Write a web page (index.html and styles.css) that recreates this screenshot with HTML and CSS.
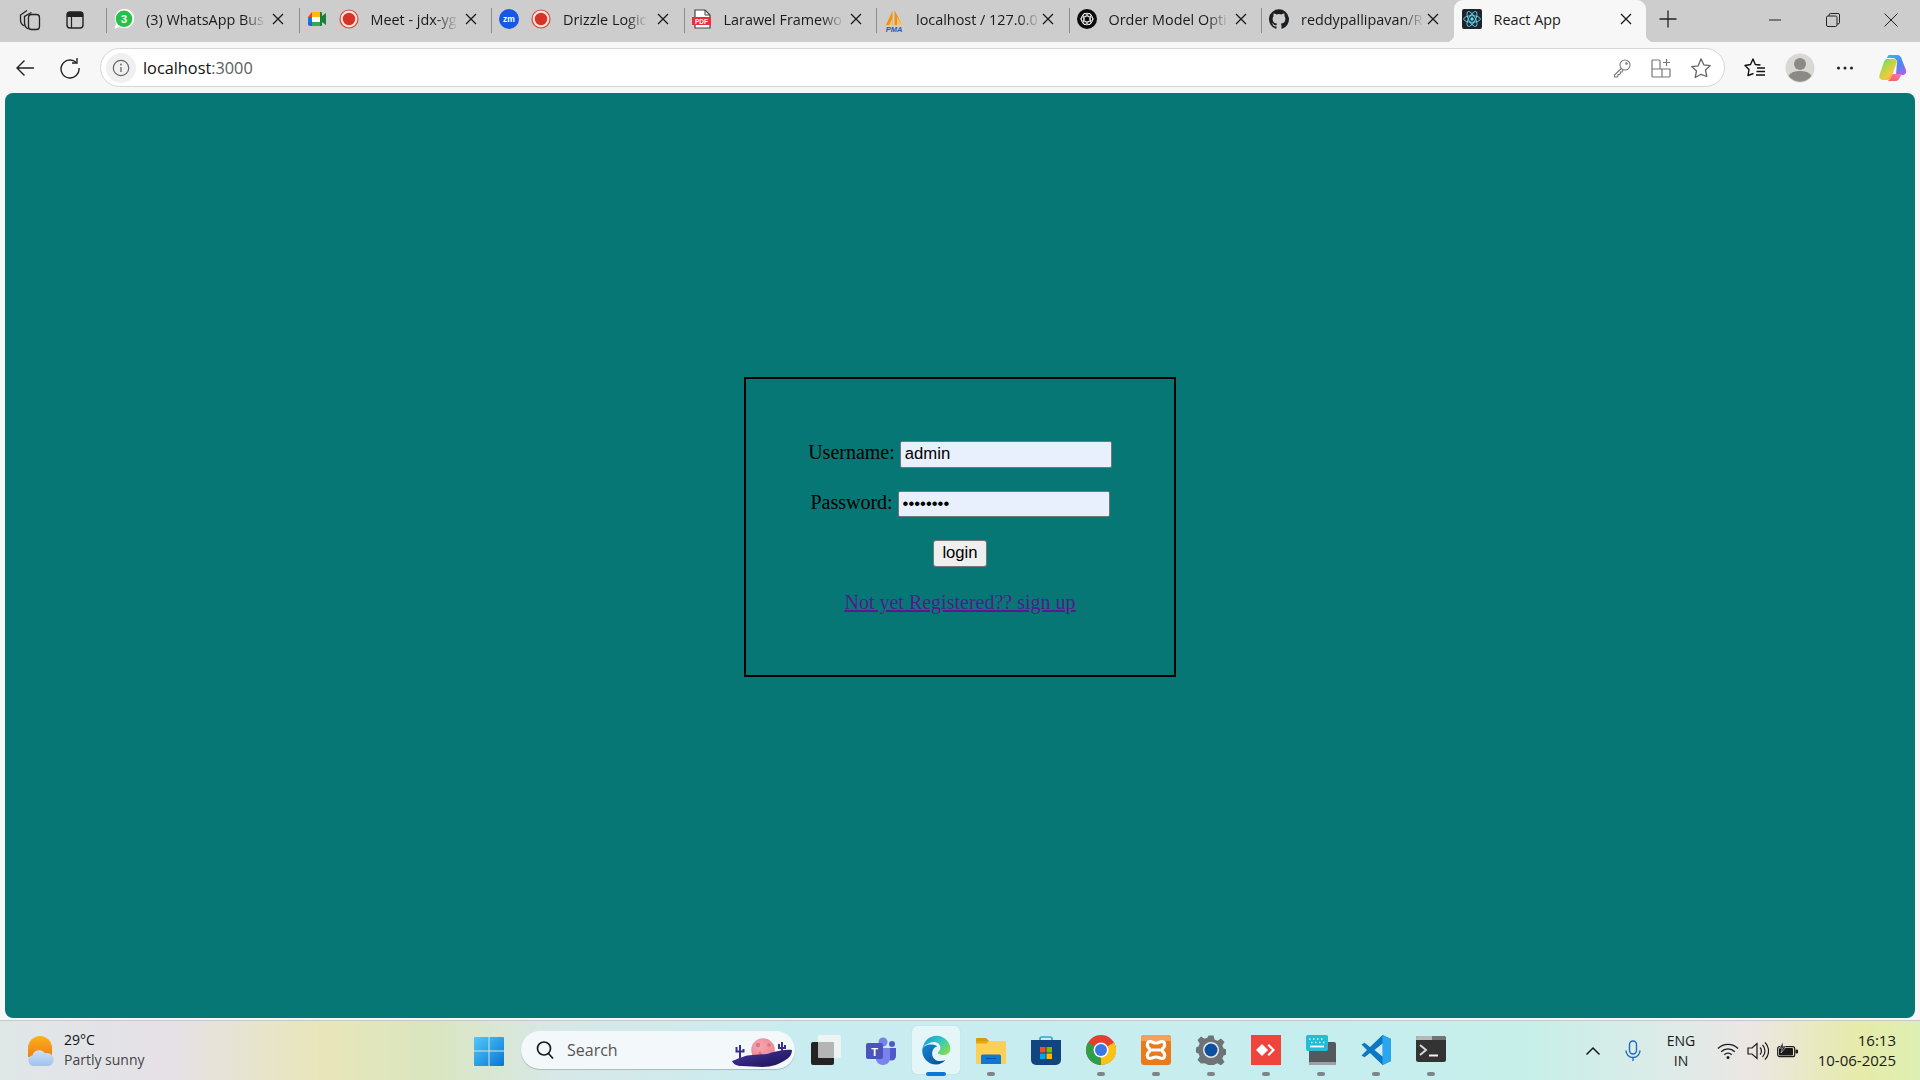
FILE: index.html
```html
<!DOCTYPE html>
<html lang="en">
<head>
<meta charset="utf-8">
<title>React App</title>
<link rel="stylesheet" href="styles.css">
</head>
<body>
<svg class="defs" aria-hidden="true">
  <defs>
    <symbol id="x" viewBox="0 0 12 12"><path d="M1 1l10 10M11 1L1 11" fill="none" stroke="#1a1a1a" stroke-width="1.3"/></symbol>
    <symbol id="rec" viewBox="0 0 20 20"><circle cx="10" cy="10" r="9" fill="#f4e4e2" stroke="#e0453a" stroke-width="1.2"/><circle cx="10" cy="10" r="6.2" fill="#dc3226"/></symbol>
  </defs>
</svg>

<header class="tabstrip">
  <div class="strip-btn"><svg width="24" height="24" viewBox="0 0 24 24" fill="none" stroke="#222" stroke-width="1.3"><rect x="10.500" y="6.500" width="11" height="15" rx="3"/><path d="M10.500 21C7.500 20 6.500 17 6.500 14V8.500L13.500 4.500"/><path d="M6.500 18C4 17 2.500 15 2.500 12V7L9 2.500"/></svg></div>
  <div class="strip-btn"><svg width="20" height="20" viewBox="0 0 20 20"><rect x="2" y="2" width="16" height="16" rx="3" fill="none" stroke="#222" stroke-width="1.4"/><path d="M2 5a3 3 0 0 1 3-3h10a3 3 0 0 1 3 3v2H2z" fill="#222"/><path d="M6.500 7v11" stroke="#222" stroke-width="1.2"/></svg></div>

  <i class="sep first"></i>
  <div class="tab">
    <svg class="fav" viewBox="0 0 20 20"><path d="M.5 19.700l1.600-5.400A9.700 9.700 0 1 1 5.800 18z" fill="#fff"/><circle cx="10" cy="9.800" r="8.300" fill="#25c24a"/><text x="10" y="14" class="fav-num">3</text></svg>
    <span class="label">(3) WhatsApp Bus</span>
    <svg class="close"><use href="#x"/></svg>
  </div>
  <i class="sep"></i>
  <div class="tab">
    <svg class="fav" viewBox="0 0 20 20"><path d="M5 3h8v5H1z" fill="#fbbc04"/><path d="M1 8h4v5H1z" fill="#1a73e8"/><path d="M5 3v5H1z" fill="#ea4335"/><path d="M1 13h4v4H3a2 2 0 0 1-2-2z" fill="#1967d2"/><path d="M5 13h8v4H5z" fill="#34a853"/><path d="M13 3v14h1a1 1 0 0 0 1-1v-3l4 3V4l-4 3V4a1 1 0 0 0-1-1z" fill="#188038"/><path d="M5 8h8v5H5z" fill="#fff"/></svg>
    <svg class="fav rec"><use href="#rec"/></svg>
    <span class="label">Meet - jdx-yg</span>
    <svg class="close"><use href="#x"/></svg>
  </div>
  <i class="sep"></i>
  <div class="tab">
    <svg class="fav" viewBox="0 0 20 20"><circle cx="10" cy="10" r="10" fill="#1557e6"/><text x="10" y="12.800" class="fav-zm">zm</text></svg>
    <svg class="fav rec"><use href="#rec"/></svg>
    <span class="label">Drizzle Logic</span>
    <svg class="close"><use href="#x"/></svg>
  </div>
  <i class="sep"></i>
  <div class="tab">
    <svg class="fav" viewBox="0 0 20 20"><path d="M3 1h10l5 5v13H3z" fill="#fff" stroke="#444" stroke-width="1.200"/><path d="M13 1v5h5" fill="none" stroke="#444"/><rect x="0" y="8" width="19" height="8" fill="#e8303a"/><text x="9.500" y="14.600" class="fav-pdf">PDF</text></svg>
    <span class="label">Larawel Framewo</span>
    <svg class="close"><use href="#x"/></svg>
  </div>
  <i class="sep"></i>
  <div class="tab">
    <svg class="fav tall" viewBox="0 0 20 24"><path d="M2 16L8.500 2v14zM10.500 16L10.500 1 18 16z" fill="#f29111"/><path d="M5 16l3.500-7v7zM13 16V8l5 8z" fill="#f8c26a"/><text x="10" y="23" class="fav-pma">PMA</text></svg>
    <span class="label">localhost / 127.0.0</span>
    <svg class="close"><use href="#x"/></svg>
  </div>
  <i class="sep"></i>
  <div class="tab">
    <svg class="fav" viewBox="0 0 20 20"><circle cx="10" cy="10" r="10" fill="#0c0c0c"/><g fill="none" stroke="#fff" stroke-width=".8"><ellipse cx="10" cy="10" rx="6.200" ry="2.800"/><ellipse cx="10" cy="10" rx="6.200" ry="2.800" transform="rotate(60 10 10)"/><ellipse cx="10" cy="10" rx="6.200" ry="2.800" transform="rotate(120 10 10)"/><circle cx="10" cy="10" r="5.800"/></g></svg>
    <span class="label">Order Model Opti</span>
    <svg class="close"><use href="#x"/></svg>
  </div>
  <i class="sep"></i>
  <div class="tab">
    <svg class="fav" viewBox="0 0 24 24"><path fill="#1b1f23" d="M12 .3a12 12 0 0 0-3.800 23.380c.6.120.830-.260.830-.570l-.020-2.230c-3.340.730-4.040-1.410-4.040-1.410-.550-1.390-1.330-1.760-1.330-1.760-1.090-.740.080-.730.080-.730 1.200.090 1.840 1.240 1.840 1.240 1.070 1.830 2.810 1.300 3.500 1 .1-.780.420-1.310.760-1.610-2.670-.3-5.470-1.330-5.470-5.930 0-1.310.470-2.380 1.240-3.220-.140-.3-.540-1.520.1-3.180 0 0 1-.320 3.300 1.230a11.500 11.500 0 0 1 6 0c2.280-1.550 3.290-1.230 3.290-1.230.640 1.660.240 2.880.120 3.180a4.650 4.650 0 0 1 1.230 3.220c0 4.610-2.800 5.630-5.480 5.920.420.360.810 1.100.810 2.220l-.010 3.290c0 .310.2.690.820.570A12 12 0 0 0 12 .3"/></svg>
    <span class="label">reddypallipavan/R</span>
    <svg class="close"><use href="#x"/></svg>
  </div>
  <div class="tab active">
    <svg class="fav" viewBox="0 0 20 20"><rect width="20" height="20" rx="2" fill="#20232a"/><g fill="none" stroke="#61dafb" stroke-width=".9"><ellipse cx="10" cy="10" rx="8.300" ry="3.300"/><ellipse cx="10" cy="10" rx="8.300" ry="3.300" transform="rotate(60 10 10)"/><ellipse cx="10" cy="10" rx="8.300" ry="3.300" transform="rotate(120 10 10)"/></g><circle cx="10" cy="10" r="1.700" fill="#61dafb"/></svg>
    <span class="label">React App</span>
    <svg class="close"><use href="#x"/></svg>
  </div>
  <div class="newtab"><svg width="18" height="18" viewBox="0 0 18 18"><path d="M9 .5v17M.5 9h17" stroke="#222" stroke-width="1.300"/></svg></div>

  <div class="winctl">
    <div class="winbtn"><svg width="14" height="14" viewBox="0 0 14 14"><path d="M1 7h12" stroke="#222" stroke-width="1"/></svg></div>
    <div class="winbtn"><svg width="14" height="14" viewBox="0 0 14 14" fill="none" stroke="#222" stroke-width="1"><rect x=".5" y="3" width="10.500" height="10.500" rx="1.500"/><path d="M3 3V2a1.500 1.500 0 0 1 1.500-1.500H12A1.500 1.500 0 0 1 13.500 2v7.500A1.500 1.500 0 0 1 12 11h-1"/></svg></div>
    <div class="winbtn"><svg width="14" height="14" viewBox="0 0 14 14"><path d="M.5.500l13 13M13.500.500l-13 13" stroke="#222" stroke-width="1"/></svg></div>
  </div>
</header>

<nav class="toolbar">
  <div class="tool"><svg width="20" height="20" viewBox="0 0 20 20"><path d="M19 10H2M9.500 2.500L2 10l7.500 7.500" fill="none" stroke="#222" stroke-width="1.400"/></svg></div>
  <div class="tool"><svg width="22" height="22" viewBox="0 0 22 22" fill="none" stroke="#222" stroke-width="1.400"><path d="M17.300 5.500A9 9 0 1 0 20 11"/><path d="M18 1v5h-5"/></svg></div>
  <div class="addr">
    <span class="info"><svg width="18" height="18" viewBox="0 0 18 18"><circle cx="9" cy="9" r="7.700" fill="none" stroke="#666" stroke-width="1.200"/><path d="M9 8v5" stroke="#666" stroke-width="1.300"/><circle cx="9" cy="5.500" r=".9" fill="#666"/></svg></span>
    <span class="url">localhost<span class="port">:3000</span></span>
    <div class="addr-tools">
      <div class="addr-tool"><svg width="20" height="20" viewBox="0 0 20 20" fill="none" stroke="#777" stroke-width="1.100"><circle cx="13" cy="7" r="5"/><circle cx="14.500" cy="5.500" r=".8"/><path d="M9.300 10.500L2.500 17v2H5l1-1v-1.500h1.500l1-1V14H10l1-2"/></svg></div>
      <div class="addr-tool"><svg width="20" height="20" viewBox="0 0 20 20" fill="none" stroke="#777" stroke-width="1.200"><path d="M11 11v8H2a1 1 0 0 1-1-1v-7zM11 11h8v7a1 1 0 0 1-1 1h-7M1 11V3a1 1 0 0 1 1-1h6a1 1 0 0 1 1 1v8M15.500 1v7M12 4.500h7"/></svg></div>
      <div class="addr-tool"><svg width="22" height="22" viewBox="0 0 22 22"><path d="M11 1.800l2.800 6 6.500.8-4.800 4.400 1.300 6.500L11 17.300l-5.800 3.200 1.300-6.500-4.800-4.400 6.500-.8z" fill="none" stroke="#666" stroke-width="1.300" stroke-linejoin="round"/></svg></div>
    </div>
  </div>
  <div class="tool-group">
    <div class="tool"><svg width="22" height="22" viewBox="0 0 22 22" fill="none" stroke="#111" stroke-width="1.400" stroke-linejoin="round"><path d="M16.500 8L11.300 7.500 9 2 6.500 7.500 1 8.500l4 4-1 6 5.500-2"/><path d="M13 11h8M12.500 14.500h8.500M12 18h9"/></svg></div>
    <div class="tool"><svg width="30" height="30" viewBox="0 0 30 30"><circle cx="15" cy="15" r="14.500" fill="#d9d8d3"/><circle cx="15" cy="11" r="6" fill="#8b8a86"/><path d="M3.500 23a12 7 0 0 1 23 0A14.500 14.500 0 0 1 3.500 23z" fill="#8b8a86"/></svg></div>
    <div class="tool"><svg width="18" height="6" viewBox="0 0 18 6" fill="#222"><circle cx="2.500" cy="3" r="1.500"/><circle cx="9" cy="3" r="1.500"/><circle cx="15.500" cy="3" r="1.500"/></svg></div>
    <div class="tool copilot"><svg width="28" height="28" viewBox="0 0 28 28"><defs><linearGradient id="cp1" x1="0" y1="0" x2="1" y2="1"><stop offset="0" stop-color="#2cc0ee"/><stop offset=".55" stop-color="#4c86f5"/><stop offset="1" stop-color="#c05ae6"/></linearGradient><linearGradient id="cp2" x1="0" y1="0" x2=".8" y2="1"><stop offset="0" stop-color="#3fc9b0"/><stop offset=".35" stop-color="#a5d94a"/><stop offset=".75" stop-color="#f6c83c"/><stop offset="1" stop-color="#f48a3a"/></linearGradient><linearGradient id="cp3" x1="0" y1="1" x2="1" y2="0"><stop offset="0" stop-color="#f5604a"/><stop offset="1" stop-color="#f078c8"/></linearGradient></defs><path d="M10 1h8c3 0 4.500 2 5 5l4 10c.8 3-1 5-4 5h-6l1-13c0-2-2-4-4-4h-6c.5-1.500 1-3 2-3z" fill="url(#cp1)"/><path d="M8 5h7c2 0 3 1.500 2.500 4l-4 11c-1 3-2.500 6-5.500 6H4c-2.500 0-4.500-2-3.500-5L5 8c.5-1.500 1.500-3 3-3z" fill="url(#cp2)"/><path d="M13.500 20H23l-3 5c-1 1.500-2 2-4 2H8.500c2-.5 4-4 5-7z" fill="url(#cp3)"/></svg></div>
  </div>
</nav>

<div class="page">
  <main class="viewport">
    <form class="login">
      <p class="row"><label>Username: </label> <input class="field" type="text" value="admin"></p>
      <p class="row"><label>Password: </label> <input class="field short" type="password" value="password"></p>
      <p class="row"><button class="btn" type="button">login</button></p>
      <p class="row link-row"><a class="reg" href="#signup">Not yet Registered?? sign up</a></p>
    </form>
  </main>
</div>

<footer class="taskbar">
  <div class="weather">
    <svg width="28" height="32" viewBox="0 0 28 32"><defs><linearGradient id="sun" x1="0" y1="0" x2="0" y2="1"><stop offset="0" stop-color="#f9b21c"/><stop offset="1" stop-color="#f07f16"/></linearGradient><linearGradient id="cloud" x1="0" y1="0" x2="0" y2="1"><stop offset="0" stop-color="#cfe0f6"/><stop offset="1" stop-color="#9fc2ee"/></linearGradient></defs><path d="M1 13a12 12 0 0 1 24 0v9H1z" fill="url(#sun)"/><path d="M7 31a5.500 5.500 0 0 1-1.500-10.800A7 7 0 0 1 18 18.300 6.500 6.500 0 0 1 22 31z" fill="url(#cloud)"/></svg>
    <div class="weather-text"><div class="temp">29°C</div><div class="cond">Partly sunny</div></div>
  </div>

  <div class="start"><svg width="30" height="30" viewBox="0 0 30 30"><defs><linearGradient id="win" x1="0" y1="0" x2="1" y2="1"><stop offset="0" stop-color="#4fcaf8"/><stop offset="1" stop-color="#0a74d6"/></linearGradient></defs><path d="M1 1h13.500v13.500H0V2a1 1 0 0 1 1-1zM15.500 1H29a1 1 0 0 1 1 1v12.500H15.500zM0 15.500h14.500V30H1a1 1 0 0 1-1-1zM15.500 15.500H30V29a1 1 0 0 1-1 1H15.500z" fill="url(#win)"/></svg></div>

  <div class="search">
    <svg width="18" height="20" viewBox="0 0 18 20" fill="none" stroke="#1a1a1a" stroke-width="1.700"><circle cx="8" cy="8.500" r="6.500"/><path d="M12.500 13.500l4.500 5"/></svg>
    <span class="search-text">Search</span>
    <svg class="moon" width="60" height="30" viewBox="0 0 60 30"><defs><linearGradient id="hill" x1="0" y1="0" x2="1" y2="1"><stop offset="0" stop-color="#4a3a9c"/><stop offset=".6" stop-color="#2b1f72"/><stop offset="1" stop-color="#1c1454"/></linearGradient><radialGradient id="moonfill" cx=".4" cy=".35" r=".7"><stop offset="0" stop-color="#f7a6ae"/><stop offset="1" stop-color="#e98396"/></radialGradient></defs><circle cx="31" cy="12" r="11.800" fill="url(#moonfill)"/><circle cx="26" cy="7" r="2.200" fill="#dc7685"/><circle cx="37" cy="7" r="1.800" fill="#dc7685"/><circle cx="28" cy="15" r="1.500" fill="#dc7685"/><path d="M8 20V7M4.500 9v4.500h7V11M50 13V4M47 6v4h6V7" fill="none" stroke="#3b2f8c" stroke-width="2"/><path d="M0 23C8 20 14 17 20 17c8-1 14 0 18-2 8-2 16-4 22-3 0 4-2 7-5 9-7 5-15 8-25 8l-20-1C5 28 1 26 0 23z" fill="url(#hill)"/></svg>
  </div>

  <div class="apps">
    <div class="app"><svg width="30" height="30" viewBox="0 0 30 30"><rect y="7" width="23" height="23" rx="2" fill="#232323"/><rect x="7" y="0" width="23" height="23" rx="2" fill="#f2f4f4" opacity=".9"/><rect x="7" y="7" width="16" height="16" rx="1" fill="#b4b6b6"/></svg><i class="dot none"></i></div>
    <div class="app"><svg width="30" height="30" viewBox="0 0 30 30"><circle cx="17" cy="7" r="4.500" fill="#7b83eb"/><circle cx="26" cy="9" r="3" fill="#5059c9"/><path d="M21 13h9v8a4.500 4.500 0 0 1-9 0z" fill="#5059c9"/><path d="M10 13h14v11a7 6 0 0 1-14 0z" fill="#7b83eb"/><rect x="0" y="8" width="17" height="16" rx="2" fill="#4b53bc"/><text x="8.500" y="21" class="teams-t">T</text></svg><i class="dot none"></i></div>
    <div class="app on"><svg width="30" height="30" viewBox="0 0 24 24"><defs><linearGradient id="edge1" x1="0" y1="0" x2="1" y2=".7"><stop offset="0" stop-color="#1a8fd8"/><stop offset=".55" stop-color="#33c6c4"/><stop offset="1" stop-color="#7fdc55"/></linearGradient><linearGradient id="edge2" x1="0" y1="0" x2="1" y2="1"><stop offset="0" stop-color="#1488d0"/><stop offset="1" stop-color="#0b4a98"/></linearGradient></defs><path d="M1 11.500C2 4.500 7 .5 12.500.5 19 .5 23.500 6 23.500 11c0 3.500-3 5-6 5-2.300 0-4-.8-4-1.800 0-1 2-1.500 2-4 0-3-3-5-6-4.500-4 .5-8 3-8.500 5.800z" fill="url(#edge1)"/><path d="M1 11.500C.5 18.500 6 23.500 12 23.500c3 0 5.500-1 7.500-3.500-3.500 1.500-8.500 1-10-2.500-1.500-3.500 0-7.500 3.500-8.500C9.500 6.500 2 7.500 1 11.500z" fill="url(#edge2)"/></svg><i class="dot wide"></i></div>
    <div class="app"><svg width="30" height="30" viewBox="0 0 30 30"><path d="M0 4a1 1 0 0 1 1-1h9l3 3h-13z" fill="#d79c0e"/><path d="M0 6h29a1 1 0 0 1 1 1v21a1 1 0 0 1-1 1H1a1 1 0 0 1-1-1z" fill="#fccf55"/><path d="M0 6h13l-3 2.500H0z" fill="#e3a712"/><path d="M5 21a1.500 1.500 0 0 1 1.500-1.500h17A1.500 1.500 0 0 1 25 21v8H5z" fill="#0f78d4"/><path d="M10 23.500h10" stroke="#0a4f92" stroke-width="1"/></svg><i class="dot"></i></div>
    <div class="app"><svg width="30" height="30" viewBox="0 0 30 30"><path d="M9 8V4a2 2 0 0 1 2-2h8a2 2 0 0 1 2 2v4" fill="none" stroke="#2aa7e0" stroke-width="1.700"/><path d="M0 5h30v20a5 5 0 0 1-5 5H5a5 5 0 0 1-5-5z" fill="#11457f"/><rect x="9" y="12" width="5.500" height="5.500" fill="#f25022"/><rect x="15.500" y="12" width="5.500" height="5.500" fill="#7fba00"/><rect x="9" y="18.500" width="5.500" height="5.500" fill="#00a4ef"/><rect x="15.500" y="18.500" width="5.500" height="5.500" fill="#ffb900"/></svg><i class="dot none"></i></div>
    <div class="app"><svg width="30" height="30" viewBox="0 0 30 30"><circle cx="15" cy="15" r="15" fill="#e53d30"/><path d="M15 15H30A15 15 0 0 1 15 30z" fill="#fbc116"/><path d="M15 30A15 15 0 0 1 2.010 7.500L15 15z" fill="#2f9e4a"/><path d="M27.990 7.500A15 15 0 0 1 21 28.800L15 15z" fill="#fbc116"/><circle cx="15" cy="15" r="7.500" fill="#fff"/><circle cx="15" cy="15" r="6" fill="#3b78e7"/></svg><i class="dot"></i></div>
    <div class="app"><svg width="30" height="30" viewBox="0 0 30 30"><rect width="30" height="30" rx="3" fill="#e87b1c"/><path d="M0 3a3 3 0 0 1 3-3h24a3 3 0 0 1 3 3v3H0z" fill="#f2a05c"/><path d="M9 6.500c2 0 3.500 1.500 6 1.500s4-1.500 6-1.500c3 0 3 3.500 2 5.500-.7 1.300-2.500 1.800-2.500 3s1.800 1.700 2.500 3c1 2 1 5.500-2 5.500-2 0-3.500-1.500-6-1.500s-4 1.500-6 1.500c-3 0-3-3.500-2-5.500.7-1.300 2.500-1.800 2.500-3s-1.800-1.700-2.500-3c-1-2-1-5.500 2-5.500z" fill="none" stroke="#fff" stroke-width="3.200"/><path d="M11 15h8" stroke="#fff" stroke-width="3"/></svg><i class="dot"></i></div>
    <div class="app"><svg width="30" height="30" viewBox="0 0 30 30"><path d="M12.500 0h5l1 4 3 1.300 3.500-2.200 3.500 3.500-2.200 3.500 1.300 3 3.400.9v5l-3.400.9-1.300 3 2.200 3.500-3.500 3.500-3.500-2.200-3 1.300-1 3.500h-5l-1-3.500-3-1.300L5 28 1.500 24.500 3.700 21l-1.300-3L0 17v-5l2.400-.9 1.300-3L1.500 4.600 5 1.100l3.500 2.200 3-1.300z" fill="#6e7378" transform="translate(0 .5)"/><circle cx="15" cy="15" r="8" fill="#e5e9ec"/><circle cx="15" cy="15" r="6.500" fill="#0f4fa0"/></svg><i class="dot"></i></div>
    <div class="app"><svg width="30" height="30" viewBox="0 0 30 30"><rect width="30" height="30" fill="#ef443b"/><path d="M11 9l6 6-6 6-6-6z" fill="#fff"/><path d="M18 9l6 6-6 6 -1.500-1.500 4.500-4.500-4.500-4.500z" fill="#fff"/></svg><i class="dot"></i></div>
    <div class="app"><svg width="30" height="30" viewBox="0 0 30 30"><rect x="3" y="7" width="27" height="23" rx="2" fill="#55585c"/><rect x="3" y="27" width="27" height="3" rx="1" fill="#9aa0a4"/><rect width="22" height="16" rx="2" fill="#22bcd4"/><path d="M3 4h1.500M7 4h1.500M11 4h1.500M15 4h1.500M5 7.500h1.500M9 7.500h1.500M13 7.500h1.500M17 7.500h1.500" stroke="#d6f6fb" stroke-width="1.500"/><path d="M4 11.500h14" stroke="#fff" stroke-width="1.800"/></svg><i class="dot"></i></div>
    <div class="app"><svg width="30" height="30" viewBox="0 0 30 30"><path d="M21.500 0L30 4v22l-8.500 4L9 18l-5.500 4.200L.500 20.500 6 15 .500 9.500l3-1.700L9 12z" fill="#0a78c2"/><path d="M21.500 0L30 4v22l-8.500 4z" fill="#2aa6ef"/><path d="M21.500 8.500L13.500 15l8 6.500z" fill="#cdeefb"/></svg><i class="dot"></i></div>
    <div class="app"><svg width="30" height="30" viewBox="0 0 30 30"><rect y="1" width="30" height="26" rx="2.500" fill="#333"/><path d="M0 3.500A2.500 2.500 0 0 1 2.500 1H16v4H0z" fill="#b7b7b7"/><path d="M16 1h11.500A2.500 2.500 0 0 1 30 3.500V5H16z" fill="#737373"/><path d="M4 10l6 5-6 5" fill="none" stroke="#d8d8d8" stroke-width="2"/><path d="M13 20.500h9" stroke="#f2f2f2" stroke-width="2"/></svg><i class="dot"></i></div>
  </div>

  <div class="tray">
    <div class="tray-chev"><svg width="16" height="10" viewBox="0 0 16 10"><path d="M1.500 8.500L8 2l6.500 6.500" fill="none" stroke="#1a1a1a" stroke-width="1.500"/></svg></div>
    <div class="tray-mic"><svg width="16" height="22" viewBox="0 0 16 22" fill="none" stroke="#2468c0" stroke-width="1.400"><rect x="4.500" y="1" width="7" height="13" rx="3.500"/><path d="M1 10.500a7 7 0 0 0 14 0M8 17.500V21"/></svg></div>
    <div class="lang"><div>ENG</div><div>IN</div></div>
    <div class="tray-ico first"><svg width="22" height="18" viewBox="0 0 22 18" fill="none" stroke="#1a1a1a" stroke-width="1.300"><path d="M1 6.500a14 14 0 0 1 20 0M4.200 9.700a9.500 9.500 0 0 1 13.600 0M7.300 12.700a5 5 0 0 1 7.400 0"/><circle cx="11" cy="15.500" r="1.500" fill="#1a1a1a" stroke="none"/></svg></div>
    <div class="tray-ico"><svg width="22" height="20" viewBox="0 0 22 20" fill="none" stroke="#1a1a1a" stroke-width="1.200"><path d="M1 7h4l5-4.500v15L5 13H1z"/><path d="M13 6.500a5 5 0 0 1 0 7M15.500 4a8.500 8.500 0 0 1 0 12M18 1.500a12 12 0 0 1 0 17"/></svg></div>
    <div class="tray-ico"><svg width="22" height="18" viewBox="0 0 22 18"><rect x=".7" y="4.700" width="17" height="10" rx="2" fill="none" stroke="#1a1a1a" stroke-width="1.200"/><rect x="2" y="6" width="14" height="7.500" rx="1" fill="#1a1a1a"/><rect x="18.500" y="7.500" width="2.500" height="4" rx="1" fill="#1a1a1a"/><path d="M6 0L2.500 6h3L4 11l5-6H6z" fill="#1a1a1a" stroke="#e8e8e2" stroke-width=".6"/></svg></div>
    <div class="clock"><div>16:13</div><div>10-06-2025</div></div>
  </div>
</footer>
</body>
</html>
```

FILE: styles.css
```css
* { box-sizing: border-box; }
html, body { margin: 0; height: 100%; }
body {
  display: flex;
  flex-direction: column;
  height: 100vh;
  overflow: hidden;
  background: #f7f7f7;
  font-family: "Open Sans", "Noto Sans", sans-serif;
  color: #1a1a1a;
}
.defs { position: absolute; width: 0; height: 0; }

/* tab strip */
.tabstrip {
  display: flex;
  align-items: center;
  height: 42px;
  flex: none;
  padding-left: 7.5px;
  background: #cdcdcd;
}
.strip-btn { width: 45px; display: flex; justify-content: center; align-items: center; height: 40px; margin-bottom: 2px; }
.sep { flex: none; width: 1px; height: 25px; margin-bottom: 2px; background: #8c8c8c; }
.sep.first { margin-left: 8.5px; }
.tab {
  position: relative;
  flex: none;
  display: flex;
  align-items: center;
  gap: 12px;
  width: 191.5px;
  height: 42px;
  padding: 0 12.500px 4px 7px;
  font-size: 14.4px;
}
.fav { flex: none; width: 20px; height: 20px; }
.fav.tall { height: 24px; margin-bottom: -3px; }
.label {
  flex: none;
  margin-right: -8px;
  white-space: nowrap;
  -webkit-mask-image: linear-gradient(to right, #000 calc(100% - 20px), rgba(0,0,0,.1));
  mask-image: linear-gradient(to right, #000 calc(100% - 20px), rgba(0,0,0,.1));
}
.close { flex: none; width: 12px; height: 12px; margin: 0 2px 0 auto; }
.tab.active {
  width: 192px;
  background: #f7f7f7;
  border-radius: 9px 9px 0 0;
  padding-left: 8px;
  padding-right: 12px;
}
.tab.active .label { -webkit-mask-image: none; mask-image: none; }
.tab.active::before, .tab.active::after {
  content: "";
  position: absolute;
  bottom: 0;
  width: 8px;
  height: 8px;
}
.tab.active::before { left: -8px; background: radial-gradient(circle at 0 0, transparent 8px, #f7f7f7 8.500px); }
.tab.active::after { right: -8px; background: radial-gradient(circle at 100% 0, transparent 8px, #f7f7f7 8.500px); }
.newtab { width: 44px; display: flex; justify-content: center; margin: 0 0 4px 0; }
.winctl { display: flex; margin-left: auto; margin-bottom: 2px; }
.winbtn { width: 58px; height: 40px; display: flex; align-items: center; justify-content: center; }

.fav-num { font: 700 11px "Liberation Sans", sans-serif; fill: #fff; text-anchor: middle; }
.fav-zm { font: 700 8.500px "Liberation Sans", sans-serif; fill: #fff; text-anchor: middle; }
.fav-pdf { font: 700 6.500px "Liberation Sans", sans-serif; fill: #fff; text-anchor: middle; }
.fav-pma { font: italic 700 7.500px "Liberation Sans", sans-serif; fill: #2d5aa8; text-anchor: middle; }
.teams-t { font: 700 11px "Liberation Sans", sans-serif; fill: #fff; text-anchor: middle; }

/* toolbar */
.toolbar {
  display: flex;
  align-items: center;
  flex: none;
  height: 51px;
  padding: 0 7.500px 0 2.500px;
  background: #f7f7f7;
}
.tool { flex: none; width: 45px; display: flex; align-items: center; justify-content: center; }
.tool-group { display: flex; margin-left: 7.500px; }
.tool.copilot { padding-left: 6px; }
.addr {
  flex: 1;
  display: flex;
  align-items: center;
  height: 39px;
  margin-left: 7.500px;
  padding-left: 5px;
  padding-right: 3.500px;
  background: #fff;
  border: 1px solid #d6d6d6;
  border-radius: 20px;
}
.info { width: 30px; height: 30px; border-radius: 50%; background: #f0f0f0; display: flex; align-items: center; justify-content: center; flex: none; }
.url { margin-left: 7px; font-size: 16.300px; color: #111; }
.port { color: #5c5c5c; }
.addr-tools { display: flex; margin-left: auto; }
.addr-tool { width: 39.500px; display: flex; justify-content: center; align-items: center; }

/* page */
.page { flex: 1; min-height: 0; padding: 0 5px 2px; background: #f7f7f7; }
.viewport {
  height: 100%;
  padding-top: 284px;
  background: #077775;
  border-radius: 8px;
  font-family: "Liberation Serif", serif;
  font-size: 20px;
  color: #000;
}
.login {
  width: 432px;
  height: 300px;
  margin: 0 auto;
  padding-top: 60px;
  border: 2px solid #000;
  text-align: center;
}
.row { height: 27px; margin: 0 0 23px; line-height: 27px; }
.field {
  width: 212px;
  height: 27px;
  padding: 0 4px;
  border: 1px solid #767676;
  border-radius: 2px;
  background: #e8f0fe;
  font: 16.670px "Liberation Sans", sans-serif;
  color: #000;
}
.field.short { height: 26px; }
.btn {
  width: 54px;
  height: 27px;
  padding: 0;
  border: 1px solid #767676;
  border-radius: 3px;
  background: #efefef;
  font: 16.670px "Liberation Sans", sans-serif;
  color: #000;
  vertical-align: 1px;
}
.reg { color: #551a8b; }

/* taskbar */
.taskbar {
  display: flex;
  flex: none;
  height: 60px;
  padding-left: 27px;
  padding-right: 24px;
  border-top: 1px solid #c6c9c9;
  background: linear-gradient(90deg, #dfe7e7 0, #e6e1e7 170px, #e8e6b9 320px, #dae6bf 430px, #d7e8e8 560px, #c9ecf0 800px, #c6eeee 1400px, #c6efe9 1520px, #dfebe8 1680px, #ece6e4 1750px, #e6eba9 1860px, #ddf0b2 1920px);
}
.weather { width: 434.500px; display: flex; align-items: center; gap: 9px; font-size: 14px; }
.weather-text { padding-bottom: 2px; }
.temp { line-height: 20px; color: #111; }
.cond { line-height: 20px; color: #444; }
.start { width: 55px; display: flex; align-items: center; justify-content: center; }
.search {
  display: flex;
  align-items: center;
  gap: 13px;
  width: 274px;
  height: 38px;
  margin: 10px 0 0 4.500px;
  padding: 0 3px 0 15px;
  background: #f3f8fa;
  border-radius: 19px;
  box-shadow: 0 1px 1px rgba(0,0,0,.2);
}
.search-text { font-size: 16px; color: #555; }
.moon { margin-left: auto; align-self: flex-end; margin-bottom: 1px; }
.apps { display: flex; margin-left: 3.500px; }
.app { position: relative; width: 55px; display: flex; flex-direction: column; align-items: center; padding-top: 14px; }
.app svg { position: relative; flex: none; }
.app.on::before {
  content: "";
  position: absolute;
  left: 3.500px;
  top: 5px;
  width: 48px;
  height: 48px;
  border-radius: 5px;
  background: rgba(255,255,255,.5);
  box-shadow: 0 0 1px rgba(0,0,0,.2);
}
.dot { position: relative; width: 8px; height: 4px; margin-top: 7px; border-radius: 2px; background: #7c8688; }
.dot.none { background: none; }
.dot.wide { width: 20px; background: #0a78d4; }
.tray { display: flex; align-items: center; margin-left: auto; font-size: 14px; }
.tray-chev, .tray-mic { width: 40px; display: flex; justify-content: center; }
.lang { width: 56px; text-align: center; line-height: 20px; }
.tray-ico { width: 30px; display: flex; justify-content: center; }
.tray-ico.first { margin-left: 4px; }
.clock { width: 93px; padding-bottom: 2px; text-align: right; line-height: 20px; font-size: 15px; }
```
